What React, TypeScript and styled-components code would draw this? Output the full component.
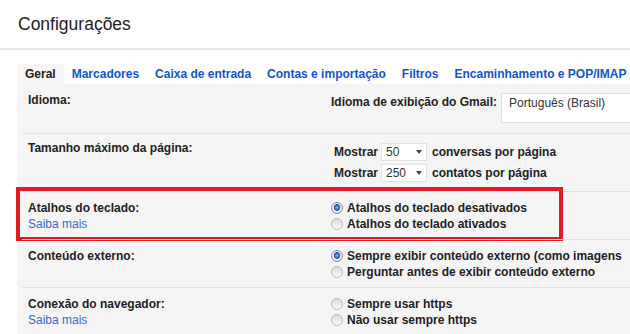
import styled, { createGlobalStyle } from "styled-components";

const Global = createGlobalStyle`
  html, body {
    margin: 0;
    padding: 0;
    background: #fff;
    overflow: hidden;
  }
  body {
    font-family: "Liberation Sans", Arial, sans-serif;
    color: #222;
  }
`;

const Page = styled.div`
  width: 630px;
  height: 334px;
  overflow: hidden;
`;

const Header = styled.div`
  height: 48px;
  display: flex;
  align-items: center;
  padding-left: 18px;
  border-bottom: 2px solid #e8e8e8;
`;

const Title = styled.h1`
  margin: 0;
  font-size: 17.5px;
  font-weight: 400;
  color: #222;
`;

const Tabs = styled.div`
  display: flex;
  margin: 14px 0 0 17px;
  height: 20px;
  white-space: nowrap;
`;

const Tab = styled.div<{ $active?: boolean }>`
  padding: 0 8px;
  line-height: 21px;
  font-size: 12px;
  font-weight: 700;
  color: ${(p) => (p.$active ? "#222" : "#15c")};
  background: ${(p) => (p.$active ? "#f5f5f5" : "transparent")};
`;

const Panel = styled.div`
  margin-left: 17px;
  background: #f5f5f5;
  height: 250px;
`;

const Row = styled.div<{ $first?: boolean; $padTop?: number; $padBottom?: number }>`
  position: relative;
  display: grid;
  grid-template-columns: 303px 1fr;
  margin-left: 5px;
  padding: ${(p) => p.$padTop ?? 8}px 0 ${(p) => p.$padBottom ?? 7}px 6px;
  border-top: ${(p) => (p.$first ? "none" : "1px solid #e3e3e3")};
  font-size: 12px;
  line-height: 16px;
  white-space: nowrap;
`;

const LabelCol = styled.div<{ $shift?: number }>`
  display: flex;
  flex-direction: column;
  margin-top: ${(p) => p.$shift ?? 0}px;
`;

const Label = styled.div`
  font-weight: 700;
  color: #222;
`;

const LearnMore = styled.a`
  color: #3a6ccb;
  text-decoration: none;
`;

const ValueCol = styled.div`
  display: flex;
  flex-direction: column;
`;

const Inline = styled.div`
  display: flex;
  align-items: flex-start;
  gap: 4px;
`;

const InlineLabel = styled.span`
  font-weight: 700;
  margin-top: 2px;
`;

const LangSelect = styled.div`
  width: 160px;
  height: 30px;
  margin: 1px 0 3px;
  box-sizing: border-box;
  background: #fff;
  border: 1px solid #e0e0e0;
  padding: 1px 0 0 7px;
  color: #333;
`;

const SizeLine = styled.div`
  display: flex;
  align-items: center;
  height: 21px;
  padding-left: 3px;
  font-weight: 700;
`;

const SizeSelect = styled.div`
  display: flex;
  align-items: center;
  justify-content: space-between;
  box-sizing: border-box;
  width: 46px;
  height: 18px;
  margin: 0 5px 0 3px;
  padding: 0 4px 0 4px;
  background: #fff;
  border: 1px solid #e2e2e2;
  font-weight: 400;
  color: #333;
`;

const Caret = styled.span`
  width: 0;
  height: 0;
  border-left: 3px solid transparent;
  border-right: 3px solid transparent;
  border-top: 4px solid #444;
`;

const Option = styled.label`
  display: flex;
  align-items: center;
  gap: 4px;
  height: 16px;
  font-weight: 700;
  color: #222;
`;

const Radio = styled.span<{ $checked?: boolean }>`
  width: 12px;
  height: 12px;
  box-sizing: border-box;
  border-radius: 50%;
  border: 1px solid ${(p) => (p.$checked ? "#8a8a8a" : "#b9b9b9")};
  background: ${(p) =>
    p.$checked
      ? "radial-gradient(circle at 50% 45%, #8cc0f5 0, #3b7ed6 1.6px, #1d55b0 3px, #e9e9e9 3.6px, #f7f7f7 4.4px, #d6d6d6 6px)"
      : "linear-gradient(#dcdcdc, #fbfbfb)"};
`;

const Highlight = styled.div`
  position: absolute;
  top: -5px;
  left: -6px;
  width: 547px;
  height: 54px;
  box-sizing: border-box;
  border: 4px solid #e11b22;
  pointer-events: none;
`;

const tabs = [
  "Geral",
  "Marcadores",
  "Caixa de entrada",
  "Contas e importação",
  "Filtros",
  "Encaminhamento e POP/IMAP",
];

function Choice({ checked, children }: { checked?: boolean; children: string }) {
  return (
    <Option>
      <Radio $checked={checked} />
      {children}
    </Option>
  );
}

export default function App() {
  return (
    <Page>
      <Global />
      <Header>
        <Title>Configurações</Title>
      </Header>
      <Tabs>
        {tabs.map((t, i) => (
          <Tab key={t} $active={i === 0}>
            {t}
          </Tab>
        ))}
      </Tabs>
      <Panel>
        <Row $first>
          <LabelCol>
            <Label>Idioma:</Label>
          </LabelCol>
          <Inline>
            <InlineLabel>Idioma de exibição do Gmail:</InlineLabel>
            <LangSelect>Português (Brasil)</LangSelect>
          </Inline>
        </Row>
        <Row $padTop={7} $padBottom={8}>
          <LabelCol $shift={-1}>
            <Label>Tamanho máximo da página:</Label>
          </LabelCol>
          <ValueCol>
            <SizeLine>
              Mostrar
              <SizeSelect>
                50
                <Caret />
              </SizeSelect>
              conversas por página
            </SizeLine>
            <SizeLine>
              Mostrar
              <SizeSelect>
                250
                <Caret />
              </SizeSelect>
              contatos por página
            </SizeLine>
          </ValueCol>
        </Row>
        <Row>
          <LabelCol>
            <Label>Atalhos do teclado:</Label>
            <LearnMore>Saiba mais</LearnMore>
          </LabelCol>
          <ValueCol>
            <Choice checked>Atalhos do teclado desativados</Choice>
            <Choice>Atalhos do teclado ativados</Choice>
          </ValueCol>
          <Highlight />
        </Row>
        <Row>
          <LabelCol>
            <Label>Conteúdo externo:</Label>
          </LabelCol>
          <ValueCol>
            <Choice checked>Sempre exibir conteúdo externo (como imagens</Choice>
            <Choice>Perguntar antes de exibir conteúdo externo</Choice>
          </ValueCol>
        </Row>
        <Row>
          <LabelCol>
            <Label>Conexão do navegador:</Label>
            <LearnMore>Saiba mais</LearnMore>
          </LabelCol>
          <ValueCol>
            <Choice>Sempre usar https</Choice>
            <Choice>Não usar sempre https</Choice>
          </ValueCol>
        </Row>
      </Panel>
    </Page>
  );
}
